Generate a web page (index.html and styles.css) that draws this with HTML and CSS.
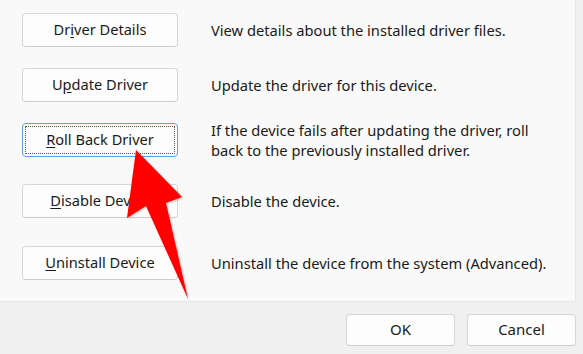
FILE: index.html
```html
<!DOCTYPE html>
<html lang="en">
<head>
    <meta charset="UTF-8">
    <meta name="viewport" content="width=device-width, initial-scale=1.0">
    <title>Driver Properties</title>
    <link rel="stylesheet" href="styles.css">
</head>
<body>
    <div class="dialog">
        <div class="panel">
            <div class="row row-1">
                <button class="btn">Dr<u>i</u>ver Details</button>
                <p class="desc">View details about the installed driver files.</p>
            </div>
            <div class="row row-2">
                <button class="btn">U<u>p</u>date Driver</button>
                <p class="desc">Update the driver for this device.</p>
            </div>
            <div class="row row-3">
                <button class="btn focused"><span class="focus-ring"><u>R</u>oll Back Driver</span></button>
                <p class="desc">If the device fails after updating the driver, roll back to the previously installed driver.</p>
            </div>
            <div class="row row-4">
                <button class="btn"><u>D</u>isable Device</button>
                <p class="desc">Disable the device.</p>
            </div>
            <div class="row row-5">
                <button class="btn"><u>U</u>ninstall Device</button>
                <p class="desc">Uninstall the device from the system (Advanced).</p>
            </div>
        </div>
        <div class="footer">
            <button class="btn btn-footer">OK</button>
            <button class="btn btn-footer">Cancel</button>
        </div>
    </div>

    <!-- annotation arrow pointing at Roll Back Driver -->
    <svg class="arrow" width="583" height="354" viewBox="0 0 583 354">
        <defs>
            <filter id="shadow" x="-20%" y="-20%" width="140%" height="140%">
                <feDropShadow dx="1" dy="1" stdDeviation="1.2" flood-color="#000" flood-opacity="0.25"/>
            </filter>
        </defs>
        <polygon points="136,150 182,197 166,203 188,299 146,206 127,218" fill="#ff0000" filter="url(#shadow)"/>
    </svg>
</body>
</html>
```

FILE: styles.css
```css
body {
    margin: 0;
    width: 583px;
    height: 354px;
    overflow: hidden;
    background-color: #f0f0f0;
    font-family: "Noto Sans", "Liberation Sans", Arial, sans-serif;
    color: #1a1a1a;
}
.dialog {
    display: flex;
    flex-direction: column;
}
.panel {
    width: 576px;
    height: 302px;
    box-sizing: border-box;
    background-color: #f9f9f9;
    border-right: 1px solid #e6e6e6;
    border-bottom: 1px solid #e6e6e6;
    padding: 13px 0 0 22px;
}
.row {
    display: flex;
    align-items: center;
    gap: 33px;
    height: 34px;
}
.row-2 { margin-top: 21px; }
.row-3 { margin-top: 21px; }
.row-4 { margin-top: 27px; }
.row-5 { margin-top: 28px; }

.btn {
    font-family: inherit;
    font-size: 14.6px;
    color: #1a1a1a;
    background-color: #fdfdfd;
    border: 1px solid #d6d6d6;
    border-bottom-color: #cccccc;
    border-radius: 4px;
    padding: 0 0 3px;
}
.row .btn {
    width: 156px;
    height: 34px;
    flex-shrink: 0;
}
.btn u {
    text-underline-offset: 2px;
}
.btn.focused {
    border: 1px solid #5a9fe6;
    padding: 2px;
}
.focus-ring {
    display: flex;
    align-items: center;
    justify-content: center;
    height: 100%;
    box-sizing: border-box;
    border: 1px dotted #555555;
    padding-bottom: 2px;
}
.desc {
    margin: 0;
    font-size: 14.7px;
    line-height: 20px;
    max-width: 340px;
}
.footer {
    display: flex;
    justify-content: flex-end;
    gap: 12px;
    padding: 12px 7px 0 0;
}
.btn-footer {
    width: 109px;
    height: 32px;
    font-size: 15px;
}
.arrow {
    position: absolute;
    top: 0;
    left: 0;
    pointer-events: none;
}
```
